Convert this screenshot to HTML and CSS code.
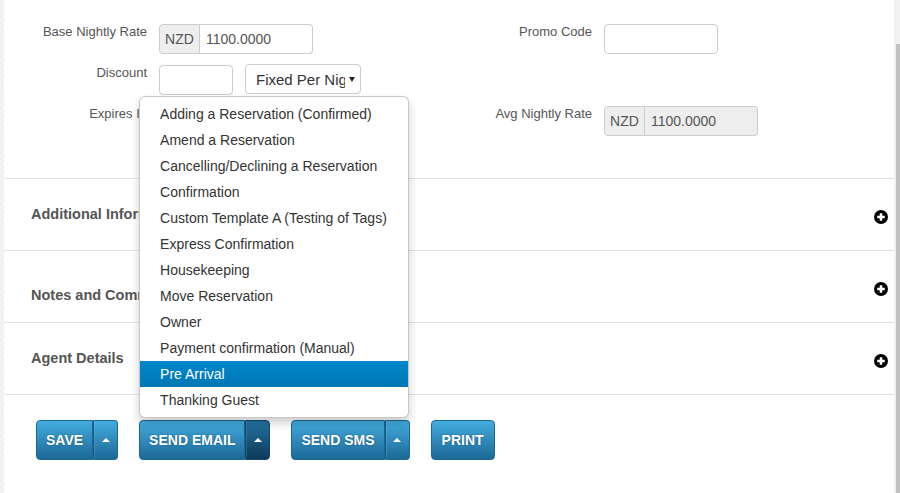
FILE: index.html
```html
<!DOCTYPE html>
<html lang="en">
<head>
<meta charset="utf-8">
<title>Reservation</title>
<link rel="stylesheet" href="styles.css">
</head>
<body>
<div class="page">
  <div class="edge"></div>
  <main class="main">
    <section class="rates">
      <div class="field">
        <label class="label">Base Nightly Rate</label>
        <div class="input-group">
          <span class="addon">NZD</span>
          <span class="input input-grouped">1100.0000</span>
        </div>
      </div>
      <div class="field">
        <label class="label">Promo Code</label>
        <span class="input input-promo"></span>
      </div>
      <div class="field">
        <label class="label">Discount</label>
        <span class="input input-small"></span>
        <div class="select">
          <span class="select-text">Fixed Per Night</span>
          <span class="select-arrow"></span>
        </div>
      </div>
      <div class="field"></div>
      <div class="field">
        <label class="label">Expires In</label>
        <span class="input input-small"></span>
      </div>
      <div class="field">
        <label class="label">Avg Nightly Rate</label>
        <div class="input-group input-group-disabled">
          <span class="addon">NZD</span>
          <span class="input input-grouped">1100.0000</span>
        </div>
      </div>
    </section>

    <div class="panels">
      <section class="panel">
        <h4 class="panel-title">Additional Information</h4>
        <svg class="plus-icon" viewBox="0 0 14 14" width="14" height="14" aria-hidden="true">
          <circle cx="7" cy="7" r="7" fill="#000"/>
          <path d="M7 3.2v7.6M3.2 7h7.6" stroke="#fff" stroke-width="2.6"/>
        </svg>
      </section>
      <section class="panel panel-notes">
        <h4 class="panel-title">Notes and Comments</h4>
        <svg class="plus-icon" viewBox="0 0 14 14" width="14" height="14" aria-hidden="true">
          <circle cx="7" cy="7" r="7" fill="#000"/>
          <path d="M7 3.2v7.6M3.2 7h7.6" stroke="#fff" stroke-width="2.6"/>
        </svg>
      </section>
      <section class="panel">
        <h4 class="panel-title">Agent Details</h4>
        <svg class="plus-icon" viewBox="0 0 14 14" width="14" height="14" aria-hidden="true">
          <circle cx="7" cy="7" r="7" fill="#000"/>
          <path d="M7 3.2v7.6M3.2 7h7.6" stroke="#fff" stroke-width="2.6"/>
        </svg>
      </section>
    </div>

    <div class="actions">
      <div class="btn-group">
        <button class="btn btn-main">SAVE</button>
        <button class="btn btn-caret"><span class="caret"></span></button>
      </div>
      <div class="btn-group">
        <button class="btn btn-main">SEND EMAIL</button>
        <button class="btn btn-caret btn-active"><span class="caret"></span></button>
        <ul class="dropdown">
          <li class="dropdown-item">Adding a Reservation (Confirmed)</li>
          <li class="dropdown-item">Amend a Reservation</li>
          <li class="dropdown-item">Cancelling/Declining a Reservation</li>
          <li class="dropdown-item">Confirmation</li>
          <li class="dropdown-item">Custom Template A (Testing of Tags)</li>
          <li class="dropdown-item">Express Confirmation</li>
          <li class="dropdown-item">Housekeeping</li>
          <li class="dropdown-item">Move Reservation</li>
          <li class="dropdown-item">Owner</li>
          <li class="dropdown-item">Payment confirmation (Manual)</li>
          <li class="dropdown-item dropdown-item-active">Pre Arrival</li>
          <li class="dropdown-item">Thanking Guest</li>
        </ul>
      </div>
      <div class="btn-group">
        <button class="btn btn-main">SEND SMS</button>
        <button class="btn btn-caret"><span class="caret"></span></button>
      </div>
      <div class="btn-group">
        <button class="btn btn-single">PRINT</button>
      </div>
    </div>
  </main>
  <div class="scrollbar"><div class="scrollbar-thumb"></div></div>
</div>
</body>
</html>
```

FILE: styles.css
```css
html, body {
  margin: 0;
  padding: 0;
  background: #fff;
}

body {
  font-family: "Liberation Sans", Arial, sans-serif;
  color: #333;
}

.page {
  display: flex;
  height: 493px;
  overflow: hidden;
}

.edge {
  width: 4px;
  flex: none;
  background: repeating-linear-gradient(45deg, #eeeeee 0 2px, #f4f4f4 2px 4px);
}

.main {
  flex: 1;
  min-width: 0;
  background: #fff;
}

/* ---------- rate form ---------- */
.rates {
  display: grid;
  grid-template-columns: 445px 445px;
  grid-auto-rows: 30px;
  row-gap: 11px;
  padding-top: 24px;
  height: 178px;
  box-sizing: border-box;
}

.field {
  display: flex;
  align-items: flex-start;
}

.label {
  width: 143px;
  flex: none;
  margin-right: 12px;
  text-align: right;
  font-size: 13px;
  line-height: 15px;
  color: #555;
}

.input {
  display: block;
  box-sizing: border-box;
  height: 30px;
  border: 1px solid #ccc;
  border-radius: 4px;
  padding: 0 6px;
  font-size: 14px;
  line-height: 28px;
  color: #555;
  background: #fff;
}

.input-small {
  width: 74px;
}

.input-promo {
  width: 114px;
}

.input-group {
  display: flex;
}

.addon {
  box-sizing: border-box;
  height: 30px;
  width: 41px;
  border: 1px solid #ccc;
  border-radius: 4px 0 0 4px;
  background: #eee;
  font-size: 14px;
  line-height: 28px;
  text-align: center;
  color: #555;
}

.input-grouped {
  width: 113px;
  border-left: 0;
  border-radius: 0 4px 4px 0;
}

.input-group-disabled .input-grouped {
  background: #eee;
}

.select {
  box-sizing: border-box;
  display: flex;
  align-items: center;
  width: 116px;
  height: 30px;
  margin-left: 12px;
  margin-top: -1px;
  padding-left: 10px;
  border: 1px solid #ccc;
  border-radius: 4px;
  background: #fff;
}

.select-text {
  display: block;
  width: 89px;
  overflow: hidden;
  white-space: nowrap;
  font-size: 15px;
  color: #333;
}

.select-arrow {
  margin-left: 4px;
  width: 0;
  height: 0;
  border-top: 5px solid #222;
  border-left: 3px solid transparent;
  border-right: 3px solid transparent;
}

/* ---------- collapsible panels ---------- */
.panels {
  border-bottom: 1px solid #e2e2e2;
}

.panel {
  box-sizing: border-box;
  height: 72px;
  border-top: 1px solid #e2e2e2;
  display: flex;
  justify-content: space-between;
  align-items: flex-start;
  padding: 0 6px 0 27px;
}

.panel-title {
  margin: 25px 0 0;
  font-size: 14.5px;
  line-height: 20px;
  font-weight: bold;
  color: #555;
}

.panel-notes .panel-title {
  margin-top: 34px;
}

.plus-icon {
  display: block;
  margin-top: 31px;
  width: 14px;
  height: 14px;
}

/* ---------- action buttons ---------- */
.actions {
  display: flex;
  gap: 21px;
  padding: 25px 0 0 32px;
}

.btn-group {
  position: relative;
  display: flex;
}

.btn {
  box-sizing: border-box;
  height: 40px;
  margin: 0;
  padding: 1px 10px 0;
  border: 1px solid #1b6795;
  background: linear-gradient(#43acdf, #1c6897);
  color: #fff;
  font-family: "Liberation Sans", Arial, sans-serif;
  font-size: 14px;
  font-weight: bold;
  line-height: 37px;
  text-shadow: 0 0 2px rgba(0, 0, 0, 0.35);
  border-radius: 4px;
  cursor: pointer;
}

.btn-main {
  padding: 1px 9px 0;
  border-radius: 4px 0 0 4px;
}

.btn-caret {
  display: flex;
  align-items: center;
  justify-content: center;
  width: 25px;
  padding: 0;
  border-left: 1px solid #165a84;
  box-shadow: inset 1px 0 0 rgba(255, 255, 255, 0.12);
  border-radius: 0 4px 4px 0;
}

.btn-active {
  background: linear-gradient(#2573a1, #0c3a57);
  border-color: #0f476b;
}

.caret {
  width: 0;
  height: 0;
  border-bottom: 4px solid #fff;
  border-left: 4px solid transparent;
  border-right: 4px solid transparent;
}

/* ---------- dropdown ---------- */
.dropdown {
  position: absolute;
  left: 0;
  bottom: 100%;
  margin: 0 0 2px;
  z-index: 10;
  box-sizing: border-box;
  width: 270px;
  padding: 4px 0;
  list-style: none;
  background: #fff;
  border: 1px solid rgba(0, 0, 0, 0.22);
  border-radius: 6px;
  box-shadow: 0 5px 10px rgba(0, 0, 0, 0.2);
}

.dropdown-item {
  padding: 3px 20px;
  font-size: 14px;
  line-height: 20px;
  color: #333;
  white-space: nowrap;
}

.dropdown-item-active {
  background: linear-gradient(#0088cc, #0077b3);
  color: #fff;
}

/* ---------- scrollbar ---------- */
.scrollbar {
  width: 6px;
  flex: none;
  background: #f1f1f1;
}

.scrollbar-thumb {
  margin: 44px 0 0 2px;
  width: 4px;
  height: 449px;
  background: #c1c1c1;
}
```
